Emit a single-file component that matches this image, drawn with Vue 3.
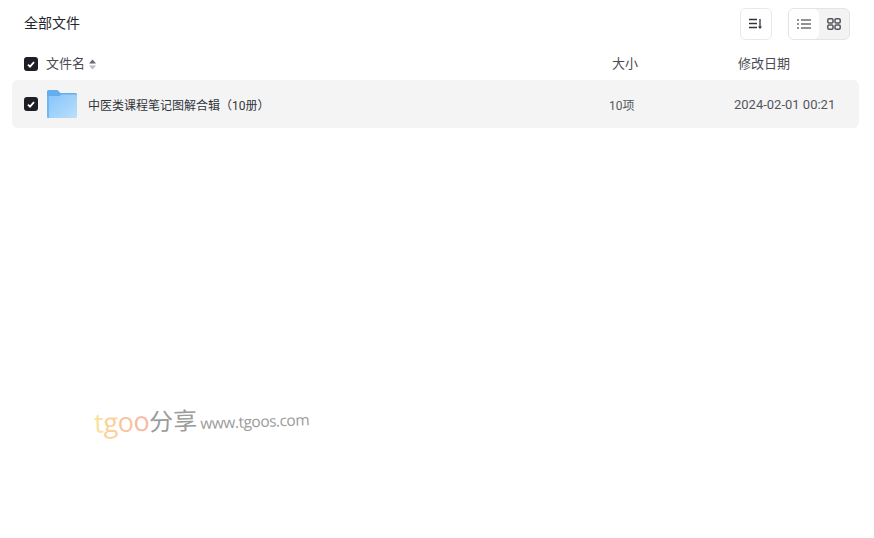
<script setup>
const files = [{ name: '中医类课程笔记图解合辑（10册）', size: '10项', date: '2024-02-01 00:21' }]
</script>

<template>
  <main class="page">
    <header class="top">
      <span class="title">全部文件</span>
      <div class="tools">
        <button class="tool-btn">
          <svg width="14" height="12" viewBox="0 0 14 12">
            <path d="M0 1.500h8M0 5.500h8M0 9.500h8" stroke="#33343b" stroke-width="1.300" fill="none" />
            <path d="M11 1v9" stroke="#33343b" stroke-width="1.300" fill="none" />
            <path d="M9 8.500h4L11 11z" fill="#33343b" />
          </svg>
        </button>
        <div class="view-switch">
          <span class="view active">
            <svg width="14" height="10" viewBox="0 0 14 10">
              <path d="M0 1h2M0 5h2M0 9h2M4 1h10M4 5h10M4 9h10" stroke="#25262b" stroke-width="1.100" fill="none" />
            </svg>
          </span>
          <span class="view">
            <svg width="14" height="12" viewBox="0 0 14 12" fill="none" stroke="#55565b" stroke-width="1.500">
              <rect x="0.800" y="0.800" width="5.200" height="4.100" rx="1.200" />
              <rect x="8" y="0.800" width="5.200" height="4.100" rx="1.200" />
              <rect x="0.800" y="7.100" width="5.200" height="4.100" rx="1.200" />
              <rect x="8" y="7.100" width="5.200" height="4.100" rx="1.200" />
            </svg>
          </span>
        </div>
      </div>
    </header>

    <div class="thead">
      <span class="check">
        <svg width="8" height="7" viewBox="0 0 8 7"><path d="M1 3.600l2 2 4-4.400" stroke="#fff" stroke-width="1.800" fill="none" /></svg>
      </span>
      <span class="col-name">
        <span class="label">文件名</span>
        <svg class="sort" width="7" height="11" viewBox="0 0 7 11">
          <path d="M3.500 0.500L7 4.500H0z" fill="#66676c" />
          <path d="M3.500 10.500L0 6.500h7z" fill="#bcbcc0" />
        </svg>
      </span>
      <span class="col-size label">大小</span>
      <span class="col-date label">修改日期</span>
    </div>

    <div v-for="file in files" :key="file.name" class="row">
      <span class="check">
        <svg width="8" height="7" viewBox="0 0 8 7"><path d="M1 3.600l2 2 4-4.400" stroke="#fff" stroke-width="1.800" fill="none" /></svg>
      </span>
      <svg class="folder" width="30" height="28" viewBox="0 0 30 28">
        <defs>
          <linearGradient id="folderFill" x1="0" y1="0" x2="1" y2="1">
            <stop offset="0" stop-color="#84c4fa" />
            <stop offset="1" stop-color="#bbdffb" />
          </linearGradient>
        </defs>
        <path d="M1.500 0h9l3 3h15a1.500 1.500 0 0 1 1.500 1.500V8H0V1.500A1.500 1.500 0 0 1 1.500 0z" fill="#63aeee" />
        <path d="M0 6h12.500l2-1.500h14A1.500 1.500 0 0 1 30 6v20.500a1.500 1.500 0 0 1-1.500 1.500H1.500A1.500 1.500 0 0 1 0 26.500z" fill="url(#folderFill)" />
        <path d="M0 6v20.500A1.500 1.500 0 0 0 1.500 28H2V6z" fill="#6fb6f3" />
        <path d="M23 12h3v1.500h-3z" fill="#a2d0f7" />
      </svg>
      <span class="name">{{ file.name }}</span>
      <span class="size">{{ file.size }}</span>
      <span class="date">{{ file.date }}</span>
    </div>

    <div class="watermark">
      <span class="wm-brand"><i>t</i><i>g</i><i>o</i><i>o</i></span><span class="wm-cn">分享</span><span class="wm-url">www.tgoos.com</span>
    </div>
  </main>
</template>

<style scoped>
.page {
  position: relative;
  width: 874px;
  height: 538px;
  background: #fff;
  color: #33343b;
  font-family: Roboto, "Noto Sans CJK SC", sans-serif;
  font-size: 12px;
  overflow: hidden;
}

.top {
  display: flex;
  align-items: center;
  justify-content: space-between;
  height: 32px;
  padding: 8px 24px 0;
}

.title {
  margin-bottom: 4px;
  font-size: 14px;
  font-family: "Noto Sans CJK SC", sans-serif;
  color: #25262b;
}

.tools {
  display: flex;
  gap: 16px;
}

.tool-btn {
  display: flex;
  align-items: center;
  justify-content: center;
  width: 32px;
  height: 32px;
  padding: 0;
  background: #fff;
  border: 1px solid #e8e8ea;
  border-radius: 6px;
}

.view-switch {
  display: flex;
  width: 62px;
  height: 32px;
  box-sizing: border-box;
  border: 1px solid #e4e4e6;
  border-radius: 6px;
  background: #f3f3f4;
  overflow: hidden;
}

.view {
  display: flex;
  align-items: center;
  justify-content: center;
  flex: 1;
}

.view.active {
  background: #fff;
  border-radius: 0 6px 6px 0;
}

.thead {
  display: flex;
  align-items: center;
  height: 32px;
  padding-top: 8px;
  padding-left: 24px;
  font-size: 13px;
  color: #4a4b52;
}

.label {
  margin-bottom: 3px;
}

.check {
  display: flex;
  align-items: center;
  justify-content: center;
  flex: none;
  width: 14px;
  height: 14px;
  border-radius: 3px;
  background: #1e1f24;
}

.col-name {
  display: flex;
  align-items: center;
  gap: 4px;
  width: 566px;
  margin-left: 8px;
}

.col-size {
  width: 126px;
}

.row {
  display: flex;
  align-items: center;
  height: 48px;
  margin: 0 15px 0 12px;
  padding-left: 12px;
  border-radius: 6px;
  background: #f4f4f4;
}

.folder {
  flex: none;
  margin-left: 9px;
}

.name {
  width: 521px;
  margin-left: 11px;
  color: #33343b;
}

.size {
  width: 125px;
  color: #55565c;
}

.date {
  font-size: 13px;
  color: #55565c;
}

.watermark {
  position: absolute;
  left: 94px;
  top: 400px;
  display: flex;
  align-items: baseline;
  transform: rotate(-2deg);
  white-space: nowrap;
}

.wm-brand {
  font-family: "Open Sans", sans-serif;
  font-size: 27px;
  letter-spacing: -0.4px;
}

.wm-brand i {
  font-style: normal;
}

.wm-brand i:nth-child(1) { color: #fbdf9c; }
.wm-brand i:nth-child(2) { color: #fbd09a; }
.wm-brand i:nth-child(3) { color: #fbc4a0; }
.wm-brand i:nth-child(4) { color: #f9b9a2; }

.wm-cn {
  font-family: "Noto Sans CJK SC", sans-serif;
  font-size: 24px;
  color: #9b9b9b;
}

.wm-url {
  margin-left: 3px;
  font-family: "Open Sans", sans-serif;
  font-size: 15.5px;
  letter-spacing: -0.5px;
  color: #9b9b9b;
}
</style>
